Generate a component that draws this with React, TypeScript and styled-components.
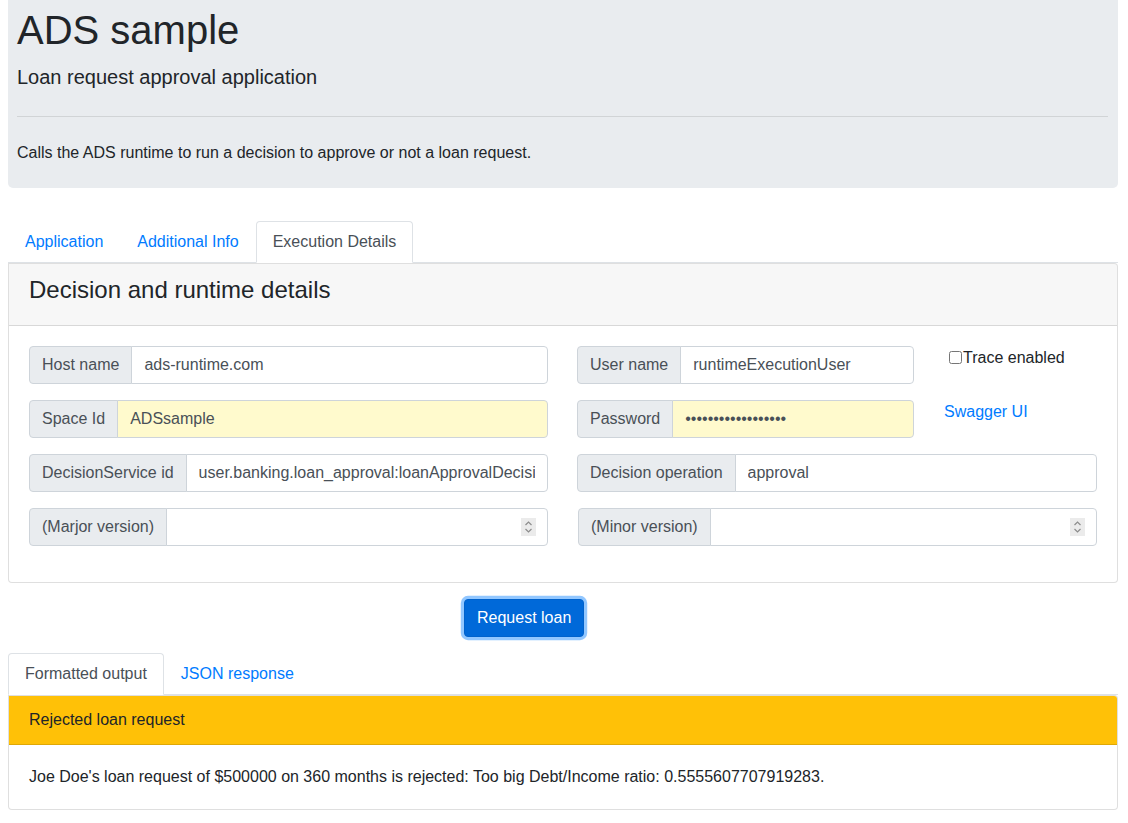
import React from "react";
import styled, { createGlobalStyle } from "styled-components";

const GlobalStyle = createGlobalStyle`
  * { box-sizing: border-box; }
  body {
    margin: 0;
    font-family: "Liberation Sans", Arial, sans-serif;
    font-size: 16px;
    line-height: 1.5;
    color: #212529;
    background: #fff;
  }
`;

const Page = styled.div`
  width: 1110px;
  margin-left: 8px;
`;

const Jumbotron = styled.header`
  background: #e9ecef;
  border-radius: 0 0 5px 5px;
  padding: 6px 10px 23px 9px;
  margin-bottom: 33px;
`;

const Title = styled.h1`
  font-size: 40px;
  font-weight: 400;
  line-height: 1.2;
  margin: 0 0 11px;
`;

const Lead = styled.p`
  font-size: 20px;
  line-height: 24px;
  margin: 0;
`;

const Rule = styled.hr`
  border: 0;
  border-top: 1px solid rgba(0, 0, 0, 0.1);
  margin: 27px 0 24px;
`;

const Text = styled.p`
  margin: 0;
`;

const Tabs = styled.nav`
  display: flex;
  border-bottom: 1px solid #dee2e6;
`;

const Tab = styled.a<{ $active?: boolean }>`
  display: block;
  padding: 8px 16px;
  margin-bottom: -1px;
  border: 1px solid transparent;
  border-radius: 4px 4px 0 0;
  text-decoration: none;
  cursor: pointer;
  color: ${(p) => (p.$active ? "#495057" : "#007bff")};
  background: ${(p) => (p.$active ? "#fff" : "transparent")};
  border-color: ${(p) => (p.$active ? "#dee2e6 #dee2e6 #fff" : "transparent")};
`;

const Card = styled.section`
  border: 1px solid rgba(0, 0, 0, 0.125);
  border-radius: 0 4px 4px 4px;
  background: #fff;
  overflow: hidden;
`;

const CardHeader = styled.div<{ $variant?: "warning" }>`
  padding: 12px 20px;
  background: ${(p) => (p.$variant === "warning" ? "#ffc107" : "rgba(0, 0, 0, 0.03)")};
  border-bottom: 1px solid rgba(0, 0, 0, 0.125);
`;

const CardTitle = styled.h4`
  font-size: 24px;
  font-weight: 400;
  line-height: 1.2;
  margin: 0 0 8px;
`;

const CardBody = styled.div`
  padding: 20px;
`;

const ResultBody = styled.div`
  padding: 20px;
`;

const FormGrid = styled.div`
  display: grid;
  grid-template-columns: 1fr 1fr;
  column-gap: 30px;
`;

const Column = styled.div`
  display: flex;
  flex-direction: column;
`;

const SubRow = styled.div`
  display: grid;
  grid-template-columns: 336px 1fr;
  column-gap: 30px;
`;

const InputGroup = styled.div<{ $shift?: number }>`
  position: relative;
  display: flex;
  height: 38px;
  margin-bottom: 16px;
  margin-left: ${(p) => (p.$shift ? `${p.$shift}px` : "0")};
`;

const Addon = styled.span`
  display: flex;
  align-items: center;
  padding: 6px 12px;
  background: #e9ecef;
  border: 1px solid #ced4da;
  border-radius: 4px 0 0 4px;
  color: #495057;
  white-space: nowrap;
  line-height: 24px;
`;

const Input = styled.input<{ $highlight?: boolean }>`
  flex: 1;
  min-width: 0;
  margin: 0 0 0 -1px;
  height: 38px;
  padding: 6px 12px;
  font-family: "Liberation Sans", Arial, sans-serif;
  font-size: 16px;
  line-height: 24px;
  color: #495057;
  background: ${(p) => (p.$highlight ? "#fffacd" : "#fff")};
  border: 1px solid #ced4da;
  border-radius: 0 4px 4px 0;
  outline: none;

  &::-webkit-inner-spin-button,
  &::-webkit-outer-spin-button {
    -webkit-appearance: none;
    margin: 0;
  }
`;

const Spinner = styled.span`
  position: absolute;
  right: 12px;
  top: 10px;
  width: 15px;
  height: 18px;
  background: #ebebeb;
  display: flex;
  align-items: center;
  justify-content: center;
  pointer-events: none;
`;

const CheckLabel = styled.label`
  display: flex;
  align-items: center;
  line-height: 24px;
  color: #212529;
`;

const CheckBox = styled.input`
  width: 13px;
  height: 13px;
  margin: 0 1px 0 5px;
`;

const Link = styled.a`
  display: block;
  margin-top: 30px;
  line-height: 24px;
  color: #007bff;
  text-decoration: none;
`;

const ButtonRow = styled.div`
  display: flex;
  padding: 16px 0 16px 456px;
`;

const PrimaryButton = styled.button`
  font-family: "Liberation Sans", Arial, sans-serif;
  font-size: 16px;
  line-height: 24px;
  padding: 6px 12px;
  color: #fff;
  background: #0069d9;
  border: 1px solid #0062cc;
  border-radius: 4px;
  box-shadow: 0 0 0 3.2px rgba(38, 143, 255, 0.5);
  cursor: pointer;
`;

type Field = {
  label: string;
  value: string;
  type?: string;
  highlight?: boolean;
  shift?: number;
};

const SpinIcon = () => (
  <svg width="9" height="14" viewBox="0 0 9 14" fill="none" stroke="#8c8c8c" strokeWidth="1.2">
    <path d="M1.5 5 L4.5 2 L7.5 5" />
    <path d="M1.5 9 L4.5 12 L7.5 9" />
  </svg>
);

const FieldGroup: React.FC<Field> = ({ label, value, type = "text", highlight, shift }) => (
  <InputGroup $shift={shift}>
    <Addon>{label}</Addon>
    <Input type={type} defaultValue={value} $highlight={highlight} />
    {type === "number" && (
      <Spinner>
        <SpinIcon />
      </Spinner>
    )}
  </InputGroup>
);

export default function App() {
  return (
    <>
      <GlobalStyle />
      <Page>
        <Jumbotron>
          <Title>ADS sample</Title>
          <Lead>Loan request approval application</Lead>
          <Rule />
          <Text>Calls the ADS runtime to run a decision to approve or not a loan request.</Text>
        </Jumbotron>

        <Tabs>
          <Tab>Application</Tab>
          <Tab>Additional Info</Tab>
          <Tab $active>Execution Details</Tab>
        </Tabs>
        <Card>
          <CardHeader>
            <CardTitle>Decision and runtime details</CardTitle>
          </CardHeader>
          <CardBody>
            <FormGrid>
              <Column>
                <FieldGroup label="Host name" value="ads-runtime.com" />
                <FieldGroup label="Space Id" value="ADSsample" highlight />
                <FieldGroup
                  label="DecisionService id"
                  value="user.banking.loan_approval:loanApprovalDecisionService"
                />
                <FieldGroup label="(Marjor version)" value="" type="number" />
              </Column>
              <Column>
                <SubRow>
                  <Column>
                    <FieldGroup label="User name" value="runtimeExecutionUser" shift={-1} />
                    <FieldGroup
                      label="Password"
                      value="runtimeUserPasswd!"
                      type="password"
                      highlight
                      shift={-1}
                    />
                  </Column>
                  <Column>
                    <CheckLabel>
                      <CheckBox type="checkbox" />
                      Trace enabled
                    </CheckLabel>
                    <Link>Swagger UI</Link>
                  </Column>
                </SubRow>
                <FieldGroup label="Decision operation" value="approval" shift={-1} />
                <FieldGroup label="(Minor version)" value="" type="number" />
              </Column>
            </FormGrid>
          </CardBody>
        </Card>

        <ButtonRow>
          <PrimaryButton>Request loan</PrimaryButton>
        </ButtonRow>

        <Tabs>
          <Tab $active>Formatted output</Tab>
          <Tab>JSON response</Tab>
        </Tabs>
        <Card>
          <CardHeader $variant="warning">Rejected loan request</CardHeader>
          <ResultBody>
            Joe Doe's loan request of $500000 on 360 months is rejected: Too big Debt/Income ratio:
            0.5555607707919283.
          </ResultBody>
        </Card>
      </Page>
    </>
  );
}
